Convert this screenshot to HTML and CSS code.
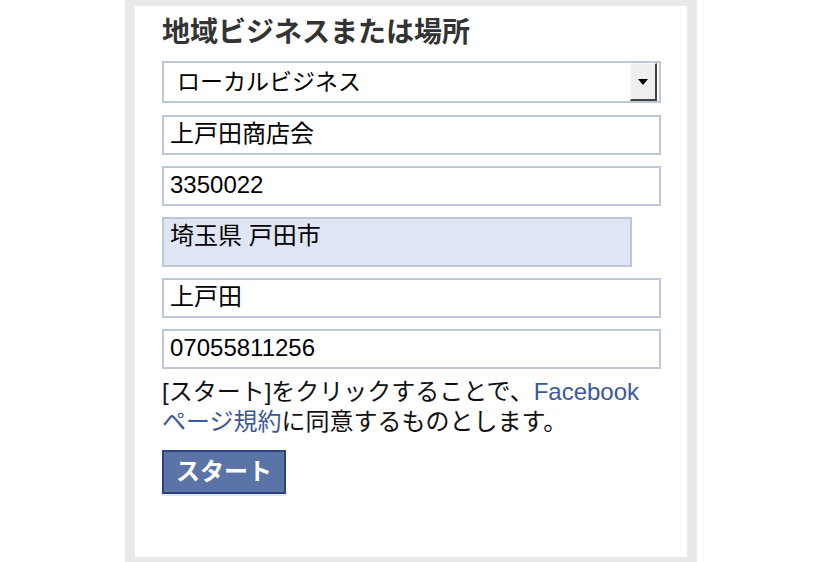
FILE: index.html
```html
<!DOCTYPE html>
<html lang="ja">
<head>
<meta charset="utf-8">
<link rel="stylesheet" href="styles.css">
</head>
<body>
<div class="frame">
  <div class="panel">
    <h2 class="title">地域ビジネスまたは場所</h2>
    <div class="form">
      <div class="select">
        <span class="select-text">ローカルビジネス</span>
        <span class="select-btn"><span class="arrow"></span></span>
      </div>
      <div class="field">上戸田商店会</div>
      <div class="field">3350022</div>
      <div class="field area">埼玉県 戸田市</div>
      <div class="field">上戸田</div>
      <div class="field">07055811256</div>
    </div>
    <p class="terms">[スタート]をクリックすることで、<a href="#">Facebook</a><br><a href="#">ページ規約</a>に同意するものとします。</p>
    <button class="start">スタート</button>
  </div>
</div>
</body>
</html>
```

FILE: styles.css
```css
html, body {
  margin: 0;
  padding: 0;
  background: #fff;
  height: 562px;
  overflow: hidden;
}
body {
  font-family: "Liberation Sans", "Noto Sans CJK JP", sans-serif;
  color: #000;
}
.frame {
  width: 552px;
  margin-left: 125px;
  background: #e9e9e9;
  padding: 6px 10px 5px;
  height: 551px;
}
.panel {
  background: #fff;
  height: 100%;
  box-sizing: border-box;
  padding: 12px 26px 0 27px;
}
.title {
  margin: 0 0 13px;
  font-size: 28px;
  line-height: 30px;
  font-weight: bold;
  color: #333;
  white-space: nowrap;
}
.form {
  display: flex;
  flex-direction: column;
  gap: 11px;
}
.select {
  height: 42px;
  box-sizing: border-box;
  border: 2px solid #bdc7d8;
  display: flex;
  align-items: stretch;
  margin-bottom: 1px;
}
.select-text {
  flex: 1;
  font-size: 23px;
  line-height: 38px;
  padding-left: 13px;
}
.select-btn {
  width: 27px;
  margin: 0 2px 0 0;
  background: #efefef;
  border-top: 1px solid #fafafa;
  border-left: 1px solid #fafafa;
  border-right: 2px solid #444;
  border-bottom: 2px solid #444;
  box-sizing: border-box;
  display: flex;
  align-items: center;
  justify-content: center;
}
.arrow {
  width: 0;
  height: 0;
  border-left: 5px solid transparent;
  border-right: 5px solid transparent;
  border-top: 6px solid #000;
}
.field {
  height: 40px;
  box-sizing: border-box;
  border: 2px solid #bdc7d8;
  font-size: 24px;
  line-height: 34px;
  padding-left: 6px;
}
.field.area {
  height: 50px;
  width: 470px;
  background: #dfe5f3;
}
.terms {
  margin: 8px 0 0;
  font-size: 24px;
  line-height: 30px;
  color: #111;
}
.terms a {
  color: #3b5998;
  text-decoration: none;
}
.start {
  display: block;
  margin-top: 13px;
  width: 124px;
  height: 44px;
  box-sizing: border-box;
  background: #5b74a8;
  border: 2px solid #29447e;
  color: #fff;
  font-family: "Noto Sans CJK JP", sans-serif;
  font-weight: bold;
  font-size: 24px;
  line-height: 34px;
  padding: 0 0 4px;
  box-shadow: 0 2px 0 #e6e6e6;
  text-align: center;
}
```
